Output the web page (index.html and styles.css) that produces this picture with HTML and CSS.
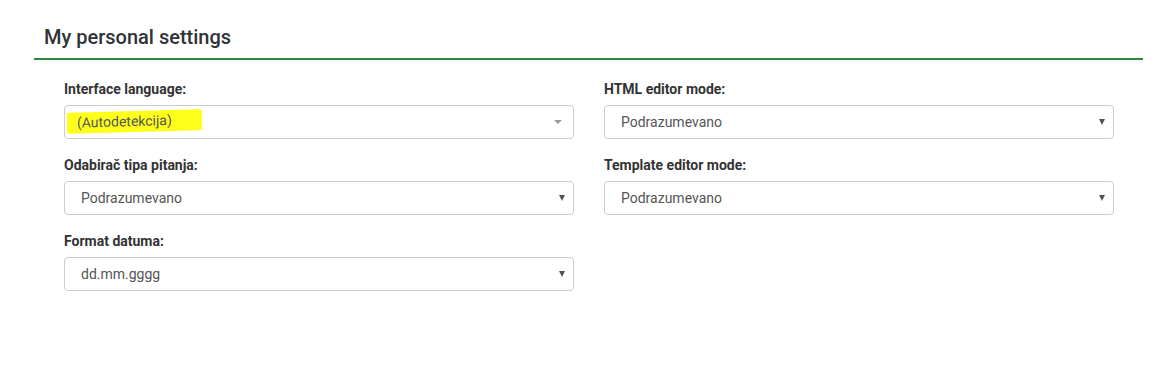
FILE: index.html
```html
<!DOCTYPE html>
<html>

<head>
  <title>My personal settings</title>

  <link rel="stylesheet" href="styles.css">
</head>

<body>
  <div class="panel">
    <div class="panel-header">
      <h3>My personal settings</h3>
    </div>

    <div class="settings-grid">
      <div class="field">
        <label>Interface language:</label>
        <div class="select select--combo">
          <span class="select-value"><span class="marker">(Autodetekcija)</span></span>
          <span class="arrow arrow--light"></span>
        </div>
      </div>

      <div class="field">
        <label>HTML editor mode:</label>
        <div class="select">
          <span class="select-value">Podrazumevano</span>
          <span class="arrow"></span>
        </div>
      </div>

      <div class="field">
        <label>Odabirač tipa pitanja:</label>
        <div class="select">
          <span class="select-value">Podrazumevano</span>
          <span class="arrow"></span>
        </div>
      </div>

      <div class="field">
        <label>Template editor mode:</label>
        <div class="select">
          <span class="select-value">Podrazumevano</span>
          <span class="arrow"></span>
        </div>
      </div>

      <div class="field">
        <label>Format datuma:</label>
        <div class="select">
          <span class="select-value">dd.mm.gggg</span>
          <span class="arrow"></span>
        </div>
      </div>
    </div>
  </div>
</body>

</html>
```

FILE: styles.css
```css
* {
  margin: 0;
  padding: 0;
  box-sizing: border-box;
}

body {
  font-family: Roboto, 'Liberation Sans', sans-serif;
  background-color: #fff;
  color: #333;
}

.panel {
  margin-left: 34px;
  width: 1109px;
  padding-top: 25px;
}

.panel-header {
  border-bottom: 2px solid #328637;
  padding: 0 0 8px 10px;
}

.panel-header h3 {
  font-size: 20px;
  font-weight: 500;
  line-height: 25px;
  color: #2f3338;
}

.settings-grid {
  display: grid;
  grid-template-columns: 510px 510px;
  column-gap: 30px;
  row-gap: 16px;
  padding: 19px 30px 0;
}

.field label {
  display: block;
  font-size: 14px;
  font-weight: 700;
  line-height: 20px;
  margin-bottom: 6px;
  color: #333;
}

.select {
  display: flex;
  align-items: center;
  justify-content: space-between;
  height: 34px;
  border: 1px solid #ccc;
  border-radius: 4px;
  padding: 0 8px 0 16px;
  font-size: 14px;
  color: #555;
}

.select--combo {
  padding-left: 2px;
  padding-right: 11px;
}

.marker {
  display: inline-block;
  background-color: #ffff1a;
  padding: 2px 30px 3px 10px;
  margin-top: -4px;
  color: #555;
  transform: skewY(-1.5deg);
  border-radius: 2px;
}

.arrow {
  width: 0;
  height: 0;
  border-left: 3px solid transparent;
  border-right: 3px solid transparent;
  border-top: 6px solid #555;
}

.arrow--light {
  border-left-width: 4px;
  border-right-width: 4px;
  border-top: 4px solid #999;
}
```
